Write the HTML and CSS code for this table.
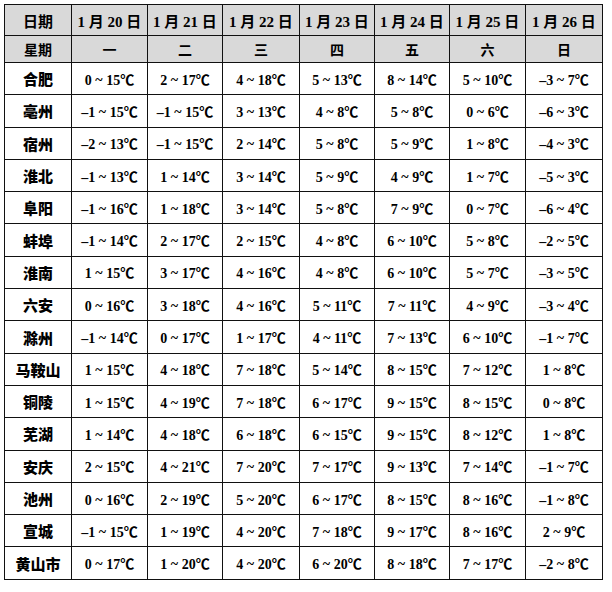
FILE: index.html
```html
<!DOCTYPE html>
<html lang="zh">
<head>
<meta charset="utf-8">
<link rel="stylesheet" href="styles.css">
</head>
<body>
<table class="weather">
<colgroup>
<col class="c-city"><col class="c76"><col class="c75"><col class="c77"><col class="c75"><col class="c75"><col class="c76"><col class="c77">
</colgroup>
<thead>
<tr class="h1"><th>日期</th><th>1 月 20 日</th><th>1 月 21 日</th><th>1 月 22 日</th><th>1 月 23 日</th><th>1 月 24 日</th><th>1 月 25 日</th><th>1 月 26 日</th></tr>
<tr class="h2"><th>星期</th><th>一</th><th>二</th><th>三</th><th>四</th><th>五</th><th>六</th><th>日</th></tr>
</thead>
<tbody>
<tr><th>合肥</th><td>0 ~ 15℃</td><td>2 ~ 17℃</td><td>4 ~ 18℃</td><td>5 ~ 13℃</td><td>8 ~ 14℃</td><td>5 ~ 10℃</td><td>–3 ~ 7℃</td></tr>
<tr><th>亳州</th><td>–1 ~ 15℃</td><td>–1 ~ 15℃</td><td>3 ~ 13℃</td><td>4 ~ 8℃</td><td>5 ~ 8℃</td><td>0 ~ 6℃</td><td>–6 ~ 3℃</td></tr>
<tr><th>宿州</th><td>–2 ~ 13℃</td><td>–1 ~ 15℃</td><td>2 ~ 14℃</td><td>5 ~ 8℃</td><td>5 ~ 9℃</td><td>1 ~ 8℃</td><td>–4 ~ 3℃</td></tr>
<tr><th>淮北</th><td>–1 ~ 13℃</td><td>1 ~ 14℃</td><td>3 ~ 14℃</td><td>5 ~ 9℃</td><td>4 ~ 9℃</td><td>1 ~ 7℃</td><td>–5 ~ 3℃</td></tr>
<tr><th>阜阳</th><td>–1 ~ 16℃</td><td>1 ~ 18℃</td><td>3 ~ 14℃</td><td>5 ~ 8℃</td><td>7 ~ 9℃</td><td>0 ~ 7℃</td><td>–6 ~ 4℃</td></tr>
<tr><th>蚌埠</th><td>–1 ~ 14℃</td><td>2 ~ 17℃</td><td>2 ~ 15℃</td><td>4 ~ 8℃</td><td>6 ~ 10℃</td><td>5 ~ 8℃</td><td>–2 ~ 5℃</td></tr>
<tr><th>淮南</th><td>1 ~ 15℃</td><td>3 ~ 17℃</td><td>4 ~ 16℃</td><td>4 ~ 8℃</td><td>6 ~ 10℃</td><td>5 ~ 7℃</td><td>–3 ~ 5℃</td></tr>
<tr><th>六安</th><td>0 ~ 16℃</td><td>3 ~ 18℃</td><td>4 ~ 16℃</td><td>5 ~ 11℃</td><td>7 ~ 11℃</td><td>4 ~ 9℃</td><td>–3 ~ 4℃</td></tr>
<tr><th>滁州</th><td>–1 ~ 14℃</td><td>0 ~ 17℃</td><td>1 ~ 17℃</td><td>4 ~ 11℃</td><td>7 ~ 13℃</td><td>6 ~ 10℃</td><td>–1 ~ 7℃</td></tr>
<tr><th>马鞍山</th><td>1 ~ 15℃</td><td>4 ~ 18℃</td><td>7 ~ 18℃</td><td>5 ~ 14℃</td><td>8 ~ 15℃</td><td>7 ~ 12℃</td><td>1 ~ 8℃</td></tr>
<tr><th>铜陵</th><td>1 ~ 15℃</td><td>4 ~ 19℃</td><td>7 ~ 18℃</td><td>6 ~ 17℃</td><td>9 ~ 15℃</td><td>8 ~ 15℃</td><td>0 ~ 8℃</td></tr>
<tr><th>芜湖</th><td>1 ~ 14℃</td><td>4 ~ 18℃</td><td>6 ~ 18℃</td><td>6 ~ 15℃</td><td>9 ~ 15℃</td><td>8 ~ 12℃</td><td>1 ~ 8℃</td></tr>
<tr><th>安庆</th><td>2 ~ 15℃</td><td>4 ~ 21℃</td><td>7 ~ 20℃</td><td>7 ~ 17℃</td><td>9 ~ 13℃</td><td>7 ~ 14℃</td><td>–1 ~ 7℃</td></tr>
<tr><th>池州</th><td>0 ~ 16℃</td><td>2 ~ 19℃</td><td>5 ~ 20℃</td><td>6 ~ 17℃</td><td>8 ~ 15℃</td><td>8 ~ 16℃</td><td>–1 ~ 8℃</td></tr>
<tr><th>宣城</th><td>–1 ~ 15℃</td><td>1 ~ 19℃</td><td>4 ~ 20℃</td><td>7 ~ 18℃</td><td>9 ~ 17℃</td><td>8 ~ 16℃</td><td>2 ~ 9℃</td></tr>
<tr><th>黄山市</th><td>0 ~ 17℃</td><td>1 ~ 20℃</td><td>4 ~ 20℃</td><td>6 ~ 20℃</td><td>8 ~ 18℃</td><td>7 ~ 17℃</td><td>–2 ~ 8℃</td></tr>
</tbody>
</table>
</body>
</html>
```
FILE: styles.css
```css
html, body {
  margin: 0;
  padding: 0;
  background: #fff;
}
body {
  padding: 4px 0 0 4px;
}
.weather {
  border-collapse: collapse;
  table-layout: fixed;
  width: 598px;
  font-family: "Liberation Serif", "Noto Sans CJK SC", serif;
  font-weight: bold;
  font-size: 14px;
  color: #000;
}
.c-city { width: 67px; }
.c75 { width: 75px; }
.c76 { width: 76px; }
.c77 { width: 77px; }
.weather th, .weather td {
  border: 1.5px solid #111;
  text-align: center;
  vertical-align: middle;
  padding: 0;
  font-weight: bold;
  white-space: nowrap;
}
.weather thead th {
  background: #d9d9d9;
}
.weather .h1 th {
  height: 30px;
  font-size: 15px;
}
.weather .h2 th {
  height: 26px;
}
.weather tbody th {
  font-size: 15px;
  font-weight: 900;
}
.weather tbody td, .weather tbody th {
  height: 31.3px;
}
```
